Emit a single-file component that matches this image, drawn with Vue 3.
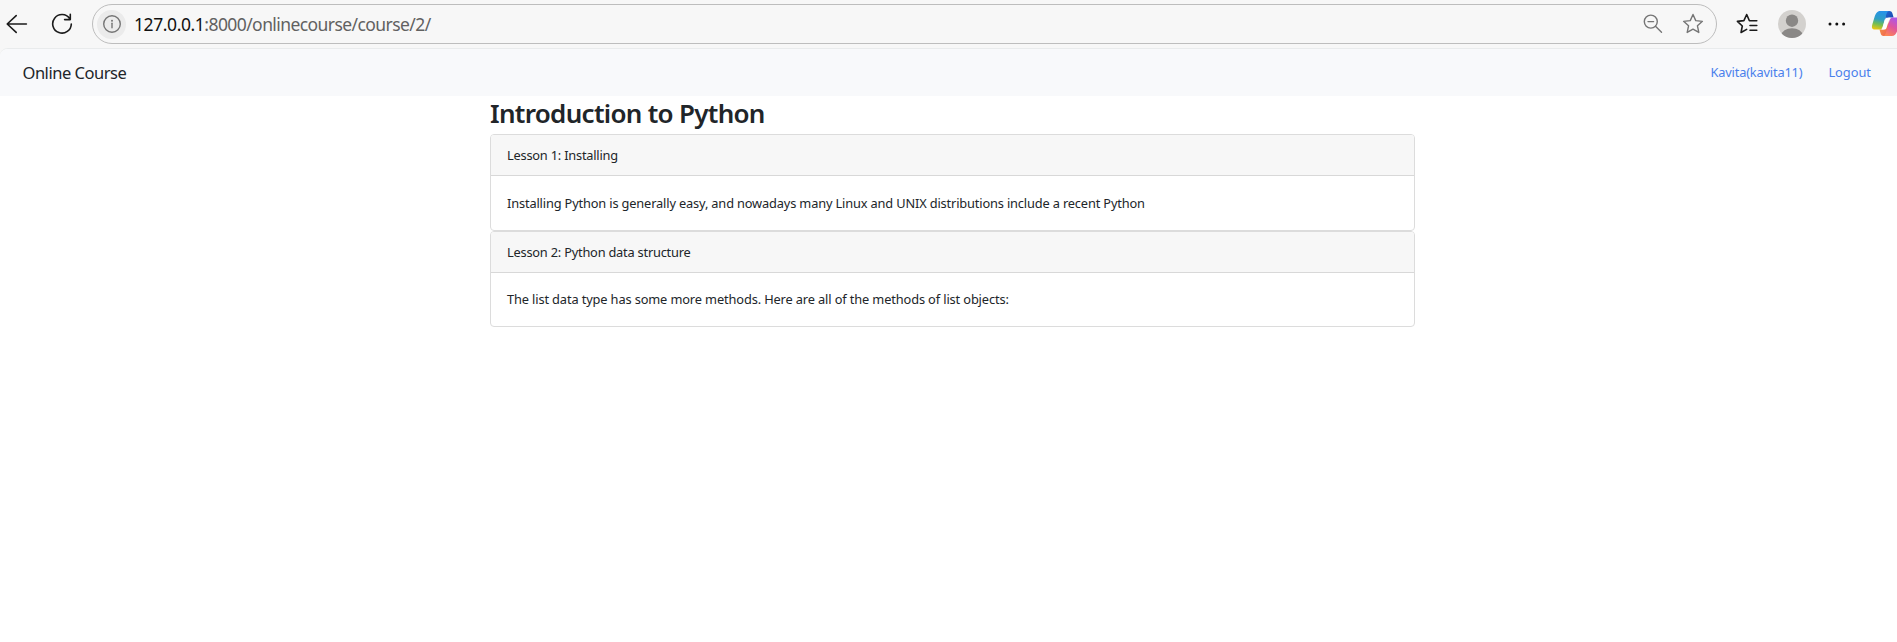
<script setup>
const lessons = [
  {
    title: 'Lesson 1: Installing',
    text: 'Installing Python is generally easy, and nowadays many Linux and UNIX distributions include a recent Python',
  },
  {
    title: 'Lesson 2: Python data structure',
    text: 'The list data type has some more methods. Here are all of the methods of list objects:',
  },
]
</script>

<template>
  <div class="window">
    <header class="toolbar">
      <svg class="back" width="22" height="20" viewBox="0 0 22 20">
        <path d="M10.2 1.6 1.2 10l9 8.400M1.200 10H20.400" />
      </svg>
      <svg class="reload" width="22" height="22" viewBox="0 0 22 22">
        <path d="M18.700 5.600A9.300 9.300 0 1 0 20.300 11M19.300 1.200V6.600H13.600" />
      </svg>
      <div class="address">
        <span class="info">
          <svg width="20" height="20" viewBox="0 0 20 20">
            <circle cx="10" cy="10" r="8.300" />
            <path d="M10 9.200v4.500" />
            <circle class="dot" cx="10" cy="6.700" r="1" />
          </svg>
        </span>
        <span class="url"><b>127.0.0.1</b>:8000/onlinecourse/course/2/</span>
        <svg class="zoom" width="20" height="20" viewBox="0 0 20 20">
          <circle cx="7.800" cy="7.600" r="6.500" />
          <path d="M5 7.600h5.600M12.500 12.300l6 5.900" />
        </svg>
        <svg class="star" width="22" height="22" viewBox="0 0 22 22">
          <path d="m11 1.500 2.750 6.100 6.650.75-4.950 4.500 1.350 6.600L11 16.150l-5.800 3.300 1.350-6.600L1.600 8.350l6.650-.75z" />
        </svg>
      </div>
      <svg class="favorites" width="22" height="22" viewBox="0 0 22 22">
        <path d="M20.800 7.700H13.400L10.700 1.500 7.900 7.600l-6.500.8 4.900 4.600-1.250 6.500 5.600-3.100M14 12.500h6.800M14 17.200h6.800" />
      </svg>
      <svg class="avatar" width="28" height="28" viewBox="0 0 28 28">
        <defs>
          <clipPath id="avatar-clip"><circle cx="14" cy="14" r="14" /></clipPath>
        </defs>
        <circle cx="14" cy="14" r="14" fill="#d3d1ce" />
        <g clip-path="url(#avatar-clip)" fill="#8a8886">
          <circle cx="14" cy="10.700" r="6.200" />
          <ellipse cx="14" cy="25.200" rx="10.500" ry="7" />
        </g>
      </svg>
      <svg class="more" width="18" height="6" viewBox="0 0 18 6">
        <circle cx="2" cy="3" r="1.500" /><circle cx="8.800" cy="3" r="1.500" /><circle cx="15.600" cy="3" r="1.500" />
      </svg>
      <svg class="copilot" width="30" height="28" viewBox="0 0 30 28">
        <defs>
          <linearGradient id="cp-left" x1="0.400" y1="0" x2="0.200" y2="1">
            <stop offset="0" stop-color="#2793e8" /><stop offset=".42" stop-color="#2f9fc4" />
            <stop offset=".68" stop-color="#70bd56" /><stop offset="1" stop-color="#f2c80c" />
          </linearGradient>
          <linearGradient id="cp-right" x1="0.700" y1="0" x2="0.200" y2="1">
            <stop offset="0" stop-color="#ab55ed" /><stop offset=".48" stop-color="#e0559d" />
            <stop offset="1" stop-color="#ff884f" />
          </linearGradient>
          <linearGradient id="cp-top" x1="0" y1="0" x2="1" y2="1">
            <stop offset="0" stop-color="#2467d4" /><stop offset="1" stop-color="#1846a8" />
          </linearGradient>
          <linearGradient id="cp-bottom" x1="0" y1="0" x2="1" y2="1">
            <stop offset="0" stop-color="#f5a13c" /><stop offset="1" stop-color="#ef5a58" />
          </linearGradient>
        </defs>
        <path fill="url(#cp-top)" d="M14 1h4.300c2 0 2.800 1.200 3.300 3l1 3.500h-4c-2.500 0-3.500 1.200-4.200 3.400z" />
        <path fill="url(#cp-bottom)" d="M8.500 19.500h3.300c2.200 0 2.700-1.300 3.300-3.300L17 10l2 9-2.400 7h-4c-1.800 0-2.600-1.200-3.100-3z" />
        <path fill="url(#cp-left)" d="M18.500 1H9.200C6.200 1 4.700 3.500 3.700 6.600L1.500 13.700C.4 17.300.7 19.600 4.300 19.600h4.200c2 0 2.600-1.300 3.200-3.200l3.500-11.700C15.900 2.400 16.800 1 18.500 1z" />
        <path fill="url(#cp-right)" d="M12.300 26h8.400c3.200 0 4.800-2.700 5.700-5.700l2.300-7.200c1.100-3.500.5-5.600-3-5.600h-4c-2 0-2.700 1.400-3.300 3.300l-3.300 11.500c-.7 2.200-1.400 3.700-2.800 3.700z" />
        <path fill="#fff" d="M15.300 7.800h4.200c-1 .7-1.300 1.800-1.700 3l-2.300 7.300c-.5 1-1.200 1.500-2.500 1.500h-2.300c.6-.8.900-1.900 1.300-3.200l1.700-5.800c.4-1.300.7-2.100 1.600-2.800z" />
      </svg>
    </header>

    <div class="page">
      <nav class="navbar">
        <span class="brand">Online Course</span>
        <a class="user">Kavita(kavita11)</a>
        <a class="logout">Logout</a>
      </nav>
      <main class="container">
        <h2>Introduction to Python</h2>
        <section v-for="(lesson, i) in lessons" :key="i" class="card" :class="'card-' + (i + 1)">
          <div class="card-header">{{ lesson.title }}</div>
          <div class="card-body">{{ lesson.text }}</div>
        </section>
      </main>
    </div>
  </div>
</template>

<style>
body {
  background: #fff;
}
</style>

<style scoped>
.window {
  width: 100%;
  height: 642px;
  overflow: hidden;
  background: #f7f7f7;
  color: #212529;
  font-family: "Noto Sans", "Open Sans", sans-serif;
  box-sizing: border-box;
}
.window * {
  box-sizing: border-box;
}
svg {
  display: block;
  flex: none;
  fill: none;
}
.toolbar {
  display: flex;
  align-items: center;
  height: 48px;
  padding-left: 6px;
  overflow: hidden;
}
.back,
.reload,
.favorites {
  stroke: #1b1b1b;
  stroke-width: 1.600;
  stroke-linejoin: round;
  stroke-linecap: round;
}
.reload {
  margin-left: 23px;
}
.address {
  display: flex;
  align-items: center;
  flex: none;
  width: 1625px;
  height: 40px;
  margin-left: 19px;
  padding: 0 12px 0 4px;
  border: 1px solid #bdbdbd;
  border-radius: 20px;
}
.info {
  display: grid;
  place-items: center;
  width: 29px;
  height: 29px;
  border-radius: 50%;
  background: #ebebeb;
}
.info svg,
.zoom,
.star {
  stroke: #757575;
  stroke-width: 1.400;
  stroke-linejoin: round;
  stroke-linecap: round;
}
.info .dot {
  fill: #757575;
  stroke: none;
}
.url {
  flex: 1;
  margin-left: 8px;
  font-size: 17.500px;
  line-height: 24px;
  color: #616161;
  white-space: nowrap;
  letter-spacing: -0.580px;
}
.url b {
  color: #111;
  font-weight: 400;
  letter-spacing: -0.420px;
}
.star {
  margin-left: 19px;
}
.favorites {
  margin-left: 19px;
}
.avatar {
  margin-left: 20px;
}
.more {
  margin-left: 22px;
  fill: #111;
}
.copilot {
  margin-left: 25px;
}
.page {
  height: 594px;
  background: #fff;
  border-top: 1px solid #e9ebec;
  border-top-left-radius: 8px;
  overflow: hidden;
}
.navbar {
  display: flex;
  align-items: center;
  height: 47px;
  padding: 0 26px 0 22.500px;
  background: #f8f9fb;
}
.brand {
  margin-right: auto;
  font-size: 16.500px;
  letter-spacing: -0.480px;
}
.user,
.logout {
  padding-bottom: 2px;
  font-size: 12.800px;
  color: #4a80ec;
}
.user {
  letter-spacing: -0.170px;
}
.logout {
  margin-left: 26px;
}
.container {
  width: 925px;
  margin-left: 490px;
}
h2 {
  margin: 0;
  height: 38px;
  font-size: 26px;
  line-height: 34px;
  font-weight: 600;
  letter-spacing: -0.700px;
  white-space: nowrap;
}
.card {
  border: 1px solid #dcdcdc;
  border-radius: 4px;
  background: #fff;
  font-size: 12.800px;
  line-height: 19px;
  white-space: nowrap;
  overflow: hidden;
}
.card-1 {
  height: 97px;
}
.card-2 {
  height: 96px;
}
.card-header {
  height: 41px;
  padding: 11px 16px 0;
  background: #f7f7f7;
  border-bottom: 1px solid #d8d8d8;
  letter-spacing: -0.210px;
}
.card-body {
  padding: 18px 16px 0;
  letter-spacing: -0.150px;
}
.card-2 .card-body {
  padding-top: 17px;
  letter-spacing: -0.125px;
}
</style>
